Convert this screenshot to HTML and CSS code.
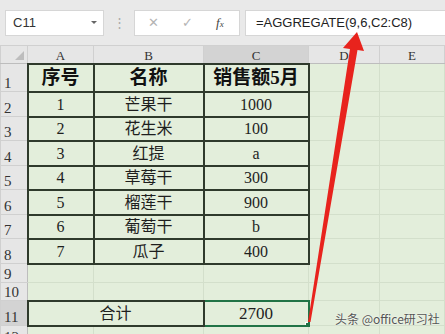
FILE: index.html
```html
<!DOCTYPE html>
<html lang="zh">
<head>
    <meta charset="UTF-8">
    <title>AGGREGATE</title>
    <link rel="stylesheet" href="styles.css">
</head>
<body>

    <div class="toolbar">
        <div class="name-box">
            <span>C11</span>
            <span class="drop"></span>
        </div>
        <div class="grip">⋮</div>
        <div class="fx-box">
            <span class="btn-x">✕</span>
            <span class="btn-ok">✓</span>
            <span class="btn-fx"><i>f</i><small>x</small></span>
        </div>
        <div class="formula">=AGGREGATE(9,6,C2:C8)</div>
    </div>

    <table class="sheet">
        <colgroup>
            <col style="width:27px">
            <col style="width:66px">
            <col style="width:110px">
            <col style="width:105px">
            <col style="width:71px">
            <col>
        </colgroup>
        <thead>
            <tr class="col-head">
                <th class="corner"><span class="tri"></span></th>
                <th>A</th>
                <th>B</th>
                <th class="sel">C</th>
                <th>D</th>
                <th>E</th>
            </tr>
        </thead>
        <tbody id="rows">
        </tbody>
    </table>

    <svg class="arrow" width="445" height="334" viewBox="0 0 445 334">
        <polygon points="308,322 310.5,322 357.5,50 364,51 357,32 343,48 350,49" fill="#e8231d"/>
    </svg>

    <div class="mark">头条 @office研习社</div>

    <script>
        var dados = [
            ["序号", "名称", "销售额5月"],
            ["1", "芒果干", "1000"],
            ["2", "花生米", "100"],
            ["3", "红提", "a"],
            ["4", "草莓干", "300"],
            ["5", "榴莲干", "900"],
            ["6", "葡萄干", "b"],
            ["7", "瓜子", "400"]
        ];
        var alturas = [28, 25, 24, 25, 24, 25, 24, 25];

        var corpo = document.getElementById("rows");
        for (var i = 0; i < dados.length; i++) {
            var linha = corpo.insertRow();
            linha.style.height = alturas[i] + "px";
            linha.className = i == 0 ? "r-title" : "r-data";
            var h = document.createElement("th");
            h.className = "row-head";
            h.innerText = i + 1;
            linha.appendChild(h);
            for (var j = 0; j < 3; j++) {
                var c = linha.insertCell();
                c.className = "box";
                c.innerText = dados[i][j];
            }
            linha.insertCell();
            linha.insertCell();
        }

        function vazia(n, alt) {
            var linha = corpo.insertRow();
            linha.style.height = alt + "px";
            var h = document.createElement("th");
            h.className = "row-head";
            h.innerText = n;
            linha.appendChild(h);
            return linha;
        }

        for (var k = 9; k <= 10; k++) {
            var l = vazia(k, k == 9 ? 19 : 18);
            for (var m = 0; m < 5; m++) l.insertCell();
        }

        var total = vazia(11, 25);
        total.firstChild.className = "row-head sel";
        var soma = total.insertCell();
        soma.colSpan = 2;
        soma.className = "box sum";
        soma.innerText = "合计";
        var valor = total.insertCell();
        valor.className = "active";
        valor.innerHTML = '2700<span class="handle"></span>';
        total.insertCell();
        total.insertCell();

        var ult = vazia(12, 20);
        for (var n = 0; n < 5; n++) ult.insertCell();
    </script>

</body>
</html>
```

FILE: styles.css
```css
body {
    margin: 0;
    padding: 0;
    width: 445px;
    height: 334px;
    overflow: hidden;
    position: relative;
    background-color: #e3eedb;
    font-family: "Liberation Serif", "Noto Sans CJK SC", serif;
}

.toolbar {
    height: 45px;
    background-color: #e9e9e9;
    display: flex;
    align-items: center;
    padding-left: 5px;
    box-sizing: border-box;
    font-family: "Liberation Sans", Arial, sans-serif;
}

.name-box {
    width: 99px;
    height: 26px;
    background-color: #fff;
    border: 1px solid #d6d6d6;
    box-sizing: border-box;
    display: flex;
    align-items: center;
    justify-content: space-between;
    padding: 0 6px 0 7px;
    font-size: 13px;
    color: #333;
}

.drop {
    width: 0;
    height: 0;
    border-left: 3px solid transparent;
    border-right: 3px solid transparent;
    border-top: 3px solid #666;
}

.grip {
    width: 30px;
    text-align: center;
    color: #aaa;
    font-size: 13px;
}

.fx-box {
    width: 106px;
    height: 26px;
    background-color: #fff;
    border: 1px solid #d6d6d6;
    box-sizing: border-box;
    display: flex;
    align-items: center;
    padding: 0 8px 0 13px;
    color: #b4b4b4;
}

.btn-x {
    font-size: 13px;
    width: 34px;
}

.btn-ok {
    font-size: 13px;
    width: 34px;
}

.btn-fx {
    font-family: "Liberation Serif", serif;
    color: #444;
    font-size: 13px;
}

.btn-fx small {
    font-size: 9px;
    font-style: italic;
}

.formula {
    flex: 1;
    height: 26px;
    margin-left: 5px;
    background-color: #fff;
    border: 1px solid #d6d6d6;
    border-right: none;
    box-sizing: border-box;
    display: flex;
    align-items: center;
    padding-left: 10px;
    font-size: 13px;
    color: #222;
}

.sheet {
    width: 445px;
    table-layout: fixed;
    border-collapse: collapse;
    text-align: center;
}

.sheet td, .sheet th {
    padding: 0;
    border: 1px solid #d3dfcb;
    overflow: hidden;
    white-space: nowrap;
    line-height: 15px;
}

.col-head {
    height: 18px;
}

.col-head th {
    background-color: #e6e6e6;
    font-weight: normal;
    font-size: 13px;
    color: #333;
    border: 1px solid #d0d0d0;
    border-bottom: 1px solid #bdbdbd;
    vertical-align: bottom;
}

.col-head th.sel {
    background-color: #d3d3d3;
}

.corner {
    position: relative;
}

.tri {
    position: absolute;
    right: 3px;
    bottom: 3px;
    width: 0;
    height: 0;
    border-left: 9px solid transparent;
    border-bottom: 9px solid #bdbdbd;
}

.row-head {
    background-color: #e6e6e6;
    font-weight: normal;
    font-size: 15px;
    color: #333;
    text-align: left;
    padding-left: 3px !important;
    vertical-align: bottom;
    border: 1px solid #d0d0d0 !important;
    border-right: 1px solid #bdbdbd !important;
}

.row-head.sel {
    background-color: #d3d3d3;
}

.sheet td.box {
    border: 2px solid #2f3a2c;
    font-size: 16px;
    color: #1e1e1e;
}

.r-title td.box {
    font-size: 19px;
    font-weight: bold;
    color: #111;
}

.sheet td.sum {
    font-size: 16px;
}

.sheet td.active {
    position: relative;
    border: 2px solid #217346;
    font-size: 17px;
    color: #1e1e1e;
}

.handle {
    position: absolute;
    right: -4px;
    bottom: -4px;
    width: 5px;
    height: 5px;
    background-color: #217346;
    border: 1px solid #fff;
}

.arrow {
    position: absolute;
    left: 0;
    top: 0;
    pointer-events: none;
}

.mark {
    position: absolute;
    left: 335px;
    top: 310px;
    font-family: "Noto Sans CJK SC", sans-serif;
    font-size: 12px;
    color: #555;
    text-shadow: 0 0 2px #fff;
}
```
